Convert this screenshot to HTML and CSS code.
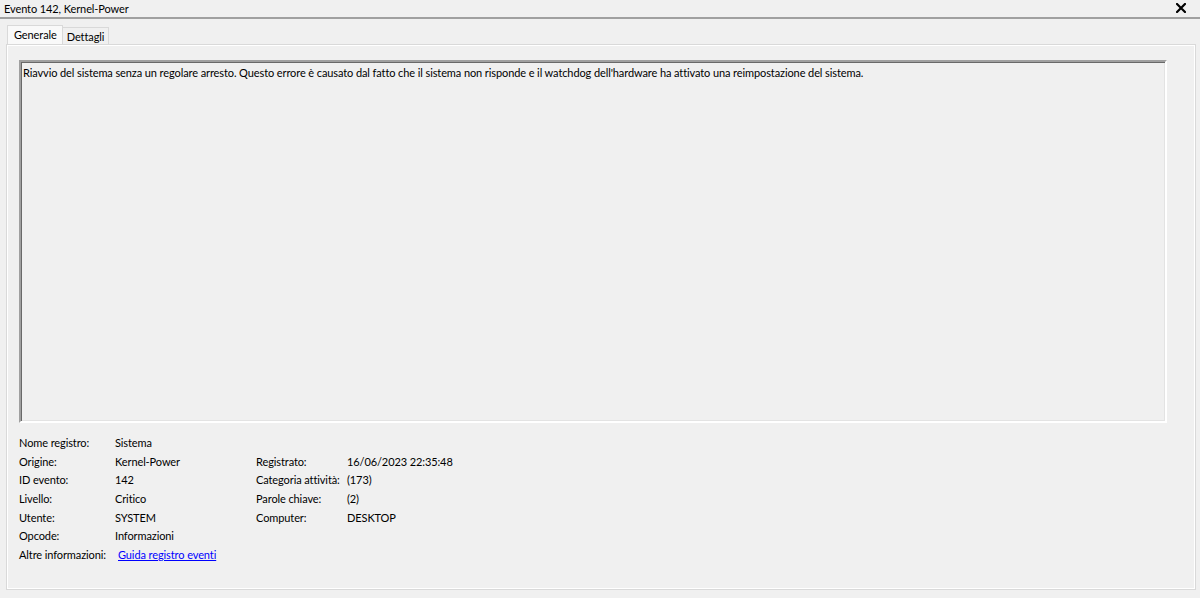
FILE: index.html
```html
<!DOCTYPE html>
<html lang="it">
<head>
<meta charset="utf-8">
<title>Evento 142, Kernel-Power</title>
<link rel="stylesheet" href="styles.css">
</head>
<body>
<div class="titlebar">
  <span class="title">Evento 142, Kernel-Power</span>
  <span class="close"><svg width="10" height="10" viewBox="0 0 10 10"><path d="M1 1L9 9M9 1L1 9" stroke="#000" stroke-width="2.2" stroke-linecap="square"/></svg></span>
</div>
<div class="tabs">
  <div class="tab active">Generale</div>
  <div class="tab">Dettagli</div>
</div>
<div class="panel">
  <div class="desc">Riavvio del sistema senza un regolare arresto. Questo errore è causato dal fatto che il sistema non risponde e il watchdog dell'hardware ha attivato una reimpostazione del sistema.</div>
  <div class="info">
    <span>Nome registro:</span><span>Sistema</span><span></span><span></span>
    <span>Origine:</span><span>Kernel-Power</span><span>Registrato:</span><span>16/06/2023 22:35:48</span>
    <span>ID evento:</span><span>142</span><span>Categoria attività:</span><span>(173)</span>
    <span>Livello:</span><span>Critico</span><span>Parole chiave:</span><span>(2)</span>
    <span>Utente:</span><span>SYSTEM</span><span>Computer:</span><span>DESKTOP</span>
    <span>Opcode:</span><span>Informazioni</span><span></span><span></span>
    <span>Altre informazioni:</span><span class="linkcell"><a href="#" class="link">Guida registro eventi</a></span><span></span><span></span>
  </div>
</div>
</body>
</html>
```
FILE: styles.css
```css
*, *::before, *::after {
  box-sizing: border-box;
}
html, body {
  margin: 0;
  padding: 0;
  background: #f0f0f0;
}
body {
  width: 1200px;
  height: 598px;
  overflow: hidden;
  font-family: Lato, "Noto Sans", "Liberation Sans", sans-serif;
  font-size: 11px;
  letter-spacing: -0.1px;
  color: #000;
}
.titlebar {
  height: 19px;
  border-bottom: 2px solid #a0a0a0;
  display: flex;
  align-items: center;
  justify-content: space-between;
  padding: 0 14px 0 4px;
}
.title {
  font-size: 11px;
  line-height: 17px;
}
.close {
  display: flex;
  align-items: center;
  padding-bottom: 2px;
}
.tabs {
  display: flex;
  align-items: flex-end;
  height: 19px;
  margin-top: 6px;
  padding-left: 7px;
}
.tab {
  height: 17px;
  line-height: 17px;
  padding: 0 4px;
  border: 1px solid #d9d9d9;
  border-bottom: none;
  border-left: none;
}
.tab.active {
  height: 19px;
  line-height: 18px;
  padding: 0 5px 0 6px;
  border-left: 1px solid #d9d9d9;
  background: #f9f9f9;
}
.panel {
  margin: 0 4px 0 6px;
  height: 546px;
  border: 1px solid #d9d9d9;
  box-shadow: inset 1px 1px 0 #fff, inset -1px -1px 0 #fff;
  padding: 15px 28px 0 12px;
}
.desc {
  height: 363px;
  border-style: solid;
  border-width: 2px;
  border-color: #a0a0a0 #fff #fff #a0a0a0;
  box-shadow: inset 1px 1px 0 #696969, inset -1px -1px 0 #e3e3e3;
  padding: 2px 2px;
  line-height: 17px;
}
.info {
  margin-top: 11px;
  display: grid;
  grid-template-columns: 96px 141px 91px auto;
  grid-auto-rows: 18.67px;
  line-height: 18.67px;
  white-space: nowrap;
}
.linkcell {
  padding-left: 3px;
}
.link {
  color: #0000ff;
  text-decoration: underline;
}
```
